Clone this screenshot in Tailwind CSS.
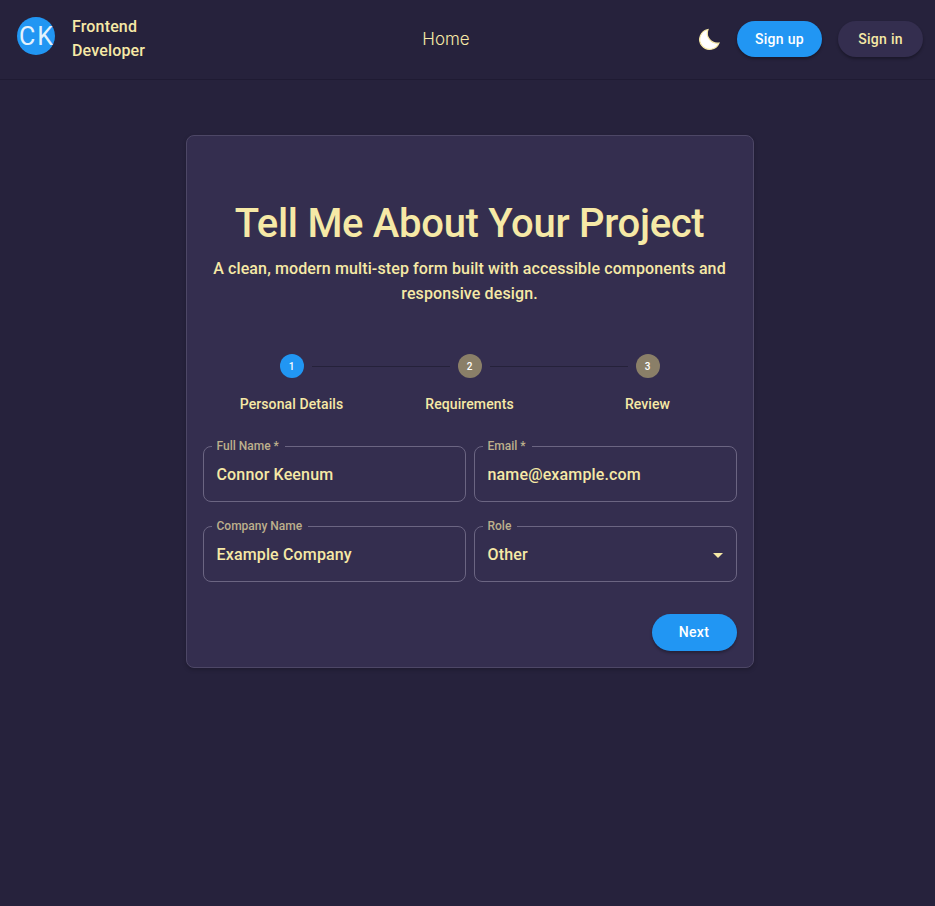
<!DOCTYPE html>
<html lang="en">
<head>
  <meta charset="UTF-8">
  <meta name="viewport" content="width=device-width, initial-scale=1.0">
  <title>Tell Me About Your Project</title>
  <script src="https://cdn.jsdelivr.net/npm/@tailwindcss/browser@4"></script>
</head>
<body class="bg-[#26223c] font-['Roboto',sans-serif] text-[#f6e9a6] min-h-[906px]">
  <!-- navbar -->
  <header class="h-[80px] border-b border-[#1f1b33] flex items-start justify-between pl-[17px] pr-3">
    <div class="flex items-start w-[300px]">
      <div class="mt-[17px] w-[38px] h-[38px] rounded-full bg-[#2196f3] text-[#e3f2fd] flex items-center justify-center pl-[2px] text-[25px] font-normal tracking-[2px] leading-none">CK</div>
      <div class="ml-[17px] mt-[15px] w-[90px] text-base font-medium tracking-[0.15px] leading-[24px]">Frontend Developer</div>
    </div>
    <nav class="mt-[27px] mr-[48px] text-[17px] font-light leading-[24px] font-['Inter',sans-serif]">Home</nav>
    <div class="flex items-center mt-[21px] w-[300px] justify-end">
      <svg class="w-6 h-6 mr-[16px]" viewBox="0 0 24 24"><path fill="#fff" stroke="#f6e9a6" stroke-width="1.2" d="M11 2.5A10 10 0 1 0 22 16 10 10 0 0 1 11 2.5z"/></svg>
      <button class="w-[85px] h-9 rounded-full bg-[#2196f3] text-white text-sm font-medium tracking-[0.3px] shadow-[0_2px_3px_rgba(0,0,0,0.3)]">Sign up</button>
      <button class="ml-4 w-[85px] h-9 rounded-full bg-[#342e4f] text-sm font-medium tracking-[0.3px] shadow-[0_2px_3px_rgba(0,0,0,0.3)]">Sign in</button>
    </div>
  </header>

  <main class="flex justify-center pt-[55px] pl-1">
    <form class="w-[568px] h-[533px] bg-[#342e4f] border border-[#4d4766] rounded-lg px-4 shadow-[0_2px_4px_rgba(0,0,0,0.2)]">
      <h1 class="mt-[64px] text-center text-[40px] leading-[48px] font-medium tracking-[-0.3px]">Tell Me About Your Project</h1>
      <p class="mt-[8px] text-center text-base font-medium tracking-[0.12px] leading-[25px] px-2">A clean, modern multi-step form built with accessible components and responsive design.</p>

      <!-- stepper -->
      <div class="mt-[48px] grid grid-cols-3 w-[534px]">
        <div class="flex flex-col items-center relative">
          <span class="w-6 h-6 rounded-full bg-[#2196f3] text-white text-[10px] font-medium flex items-center justify-center">1</span>
          <span class="mt-[16px] text-sm font-medium tracking-[0.1px] leading-5">Personal Details</span>
        </div>
        <div class="flex flex-col items-center relative">
          <span class="absolute top-[12px] left-[-69px] w-[138px] h-px bg-[#25213a]"></span>
          <span class="w-6 h-6 rounded-full bg-[#8a7f68] text-white text-[10px] font-medium flex items-center justify-center">2</span>
          <span class="mt-[16px] text-sm font-medium tracking-[0.1px] leading-5">Requirements</span>
        </div>
        <div class="flex flex-col items-center relative">
          <span class="absolute top-[12px] left-[-69px] w-[138px] h-px bg-[#25213a]"></span>
          <span class="w-6 h-6 rounded-full bg-[#8a7f68] text-white text-[10px] font-medium flex items-center justify-center">3</span>
          <span class="mt-[16px] text-sm font-medium tracking-[0.1px] leading-5">Review</span>
        </div>
      </div>

      <!-- fields -->
      <div class="mt-[32px] grid grid-cols-2 gap-x-2 gap-y-6">
        <div class="relative h-14 flex items-center px-[14px] pt-[2px] text-base font-medium tracking-[0.15px]">
          Connor Keenum
          <fieldset class="absolute inset-0 -top-[5px] border border-[#6b6582] rounded-lg px-[8px] pointer-events-none">
            <legend class="pl-[5px] pr-[6px] text-xs leading-[11px] tracking-normal text-[#bdb08c]">Full Name *</legend>
          </fieldset>
        </div>
        <div class="relative h-14 flex items-center px-[14px] pt-[2px] text-base font-medium tracking-[0.15px]">
          name@example.com
          <fieldset class="absolute inset-0 -top-[5px] border border-[#6b6582] rounded-lg px-[8px] pointer-events-none">
            <legend class="pl-[5px] pr-[6px] text-xs leading-[11px] tracking-normal text-[#bdb08c]">Email *</legend>
          </fieldset>
        </div>
        <div class="relative h-14 flex items-center px-[14px] pt-[2px] text-base font-medium tracking-[0.15px]">
          Example Company
          <fieldset class="absolute inset-0 -top-[5px] border border-[#6b6582] rounded-lg px-[8px] pointer-events-none">
            <legend class="pl-[5px] pr-[6px] text-xs leading-[11px] tracking-normal text-[#bdb08c]">Company Name</legend>
          </fieldset>
        </div>
        <div class="relative h-14 flex items-center justify-between pl-[14px] pr-[14px] pt-[2px] text-base font-medium tracking-[0.15px]">
          Other
          <span class="w-0 h-0 border-x-[5px] border-x-transparent border-t-[5px] border-t-[#f6e9a6]"></span>
          <fieldset class="absolute inset-0 -top-[5px] border border-[#6b6582] rounded-lg px-[8px] pointer-events-none">
            <legend class="pl-[5px] pr-[6px] text-xs leading-[11px] tracking-normal text-[#bdb08c]">Role</legend>
          </fieldset>
        </div>
      </div>

      <div class="mt-8 flex justify-end">
        <button type="button" class="w-[85px] h-[37px] pb-[2px] rounded-full bg-[#2196f3] text-white text-sm font-medium tracking-[0.3px] shadow-[0_2px_3px_rgba(0,0,0,0.3)]">Next</button>
      </div>
    </form>
  </main>
</body>
</html>
